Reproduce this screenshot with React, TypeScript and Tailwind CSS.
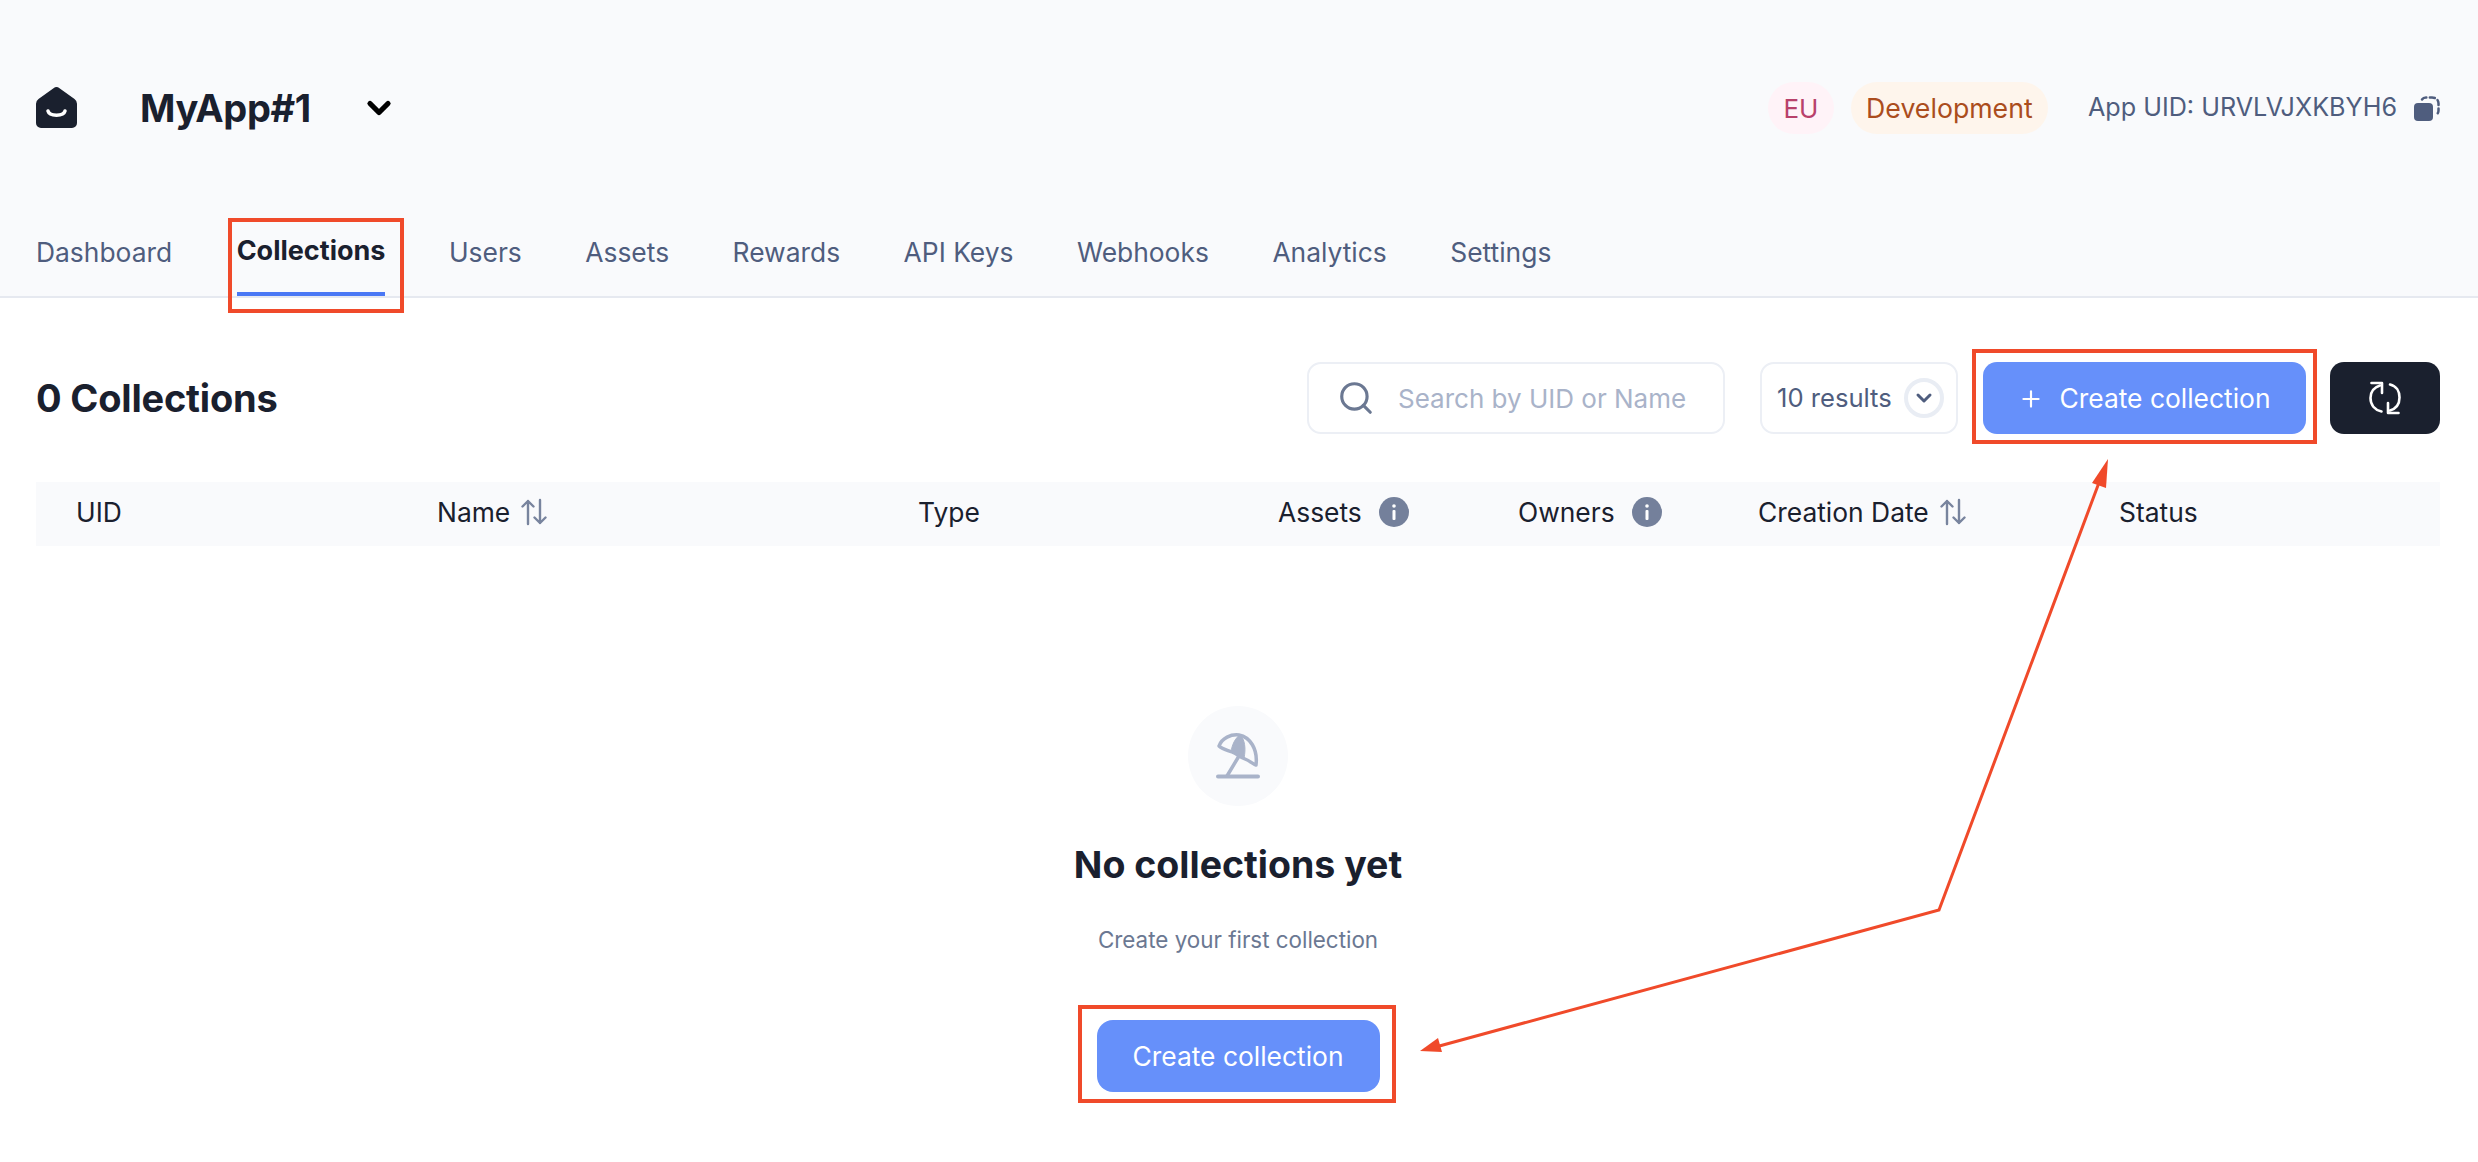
import { ChevronDown, Plus, Search } from 'lucide-react'

const tabs = ['Dashboard', 'Collections', 'Users', 'Assets', 'Rewards', 'API Keys', 'Webhooks', 'Analytics', 'Settings']

function Logo() {
  return (
    <svg width="41" height="42" viewBox="0 0 41 42" className="shrink-0">
      <path d="M17.5 1.2a5 5 0 0 1 6 0L38.5 12a6 6 0 0 1 2.5 4.8V36a5 5 0 0 1-5 5H5a5 5 0 0 1-5-5V16.8A6 6 0 0 1 2.5 12z" fill="#1a202e" />
      <path d="M12 24c1.5 5.5 15.500 5.500 17 0" fill="none" stroke="#fff" strokeWidth="3.500" strokeLinecap="round" />
    </svg>
  )
}

function CopyIcon() {
  return (
    <svg width="26" height="25" viewBox="0 0 26 25">
      <rect x="0" y="7" width="19" height="18" rx="4" fill="#4f5d7e" />
      <path d="M8 3.500c1-1.500 2-2 4-2h6c4 0 6.500 2.500 6.500 6v7c0 1.500-.5 3-2 4" fill="none" stroke="#4f5d7e" strokeWidth="2.500" strokeDasharray="5 3.500" strokeLinecap="round" />
    </svg>
  )
}

function SortArrows() {
  return (
    <svg width="28" height="28" viewBox="0 0 28 28" fill="none" strokeWidth="2.400" strokeLinecap="round" strokeLinejoin="round" stroke="#78849e">
      <path d="M8 26V3M2.500 8.500 8 3l5.500 5.500" />
      <path d="M20 2v23M14.500 19.500 20 25l5.500-5.500" />
    </svg>
  )
}

function InfoDot() {
  return (
    <span className="flex size-[30px] items-center justify-center rounded-full bg-[#74809b]">
      <svg width="6" height="16" viewBox="0 0 6 16" fill="#fff">
        <circle cx="3" cy="2" r="1.800" />
        <rect x="1.500" y="6" width="3" height="10" rx="1" />
      </svg>
    </span>
  )
}

function RefreshIcon() {
  return (
    <svg width="32" height="34" viewBox="0 0 32 34" fill="none" stroke="#fff" strokeWidth="2.600" strokeLinecap="round" strokeLinejoin="round">
      <path d="M2.500 2H13v10" />
      <path d="M11 4.500C4.500 6.500 1.500 11.500 1.500 17c0 7 4.500 12 11 13.500" />
      <path d="M29.500 32H19V22" />
      <path d="M21 3.500c6.500 1.500 9.500 7 9.500 13 0 6-3 11-9.500 13" />
    </svg>
  )
}

function BeachIcon() {
  return (
    <svg width="44" height="46" viewBox="0 0 44 46" fill="none" stroke="#a9b3c9" strokeLinecap="round" strokeLinejoin="round">
      <path d="M3 13C6 5 15 1 23 2c11 2 19 14 17 30-3-1-6-4-11-6-5-2-8-5-13-7-5-2-10-3-13-6z" strokeWidth="3.500" />
      <path d="M24 2c5 4 6 14 4 23-4-2-9-4-13-6 1-7 4-14 9-17z" fill="#a9b3c9" strokeWidth="1" />
      <path d="M23 23 11 43" strokeWidth="3.500" />
      <path d="M2 43.500h40" strokeWidth="4" />
    </svg>
  )
}

// Callouts drawn over the page: boxes around both create buttons and the tab, plus the arrows between them
function Callouts() {
  return (
    <>
      <div className="absolute left-[228px] top-[218px] h-[95px] w-[176px] border-4 border-[#f04a2a]" />
      <div className="absolute left-[1972px] top-[349px] h-[95px] w-[345px] border-4 border-[#f04a2a]" />
      <div className="absolute left-[1078px] top-[1005px] h-[98px] w-[318px] border-4 border-[#f04a2a]" />
      <svg className="pointer-events-none absolute left-0 top-0" width="2478" height="1162" fill="none">
        <path d="M1432 1048 1939 910 2100 480" stroke="#f04a2a" strokeWidth="3" />
        <path d="M1420 1051 1438 1038 1442 1052z" fill="#f04a2a" />
        <path d="M2108 459 2092 483 2106 488z" fill="#f04a2a" />
      </svg>
    </>
  )
}

export default function App() {
  return (
    <div className="relative min-h-[1162px] bg-white font-['Inter',sans-serif] text-[#1a202e]">
      <header className="h-[298px] border-b-2 border-[#e6e9f0] bg-[#f9fafc] pl-9 pr-[38px]">
        <div className="flex h-[216px] items-center justify-between">
          <div className="flex items-center">
            <Logo />
            <h1 className="ml-[63px] text-[38px] font-bold tracking-[-0.01em]">MyApp#1</h1>
            <ChevronDown className="ml-[50px] size-[36px] text-black" strokeWidth={3.500} />
          </div>
          <div className="flex items-center">
            <span className="flex h-[52px] w-[66px] items-center justify-center rounded-full bg-[#fff3f8] text-[26px] text-[#b8416b]">EU</span>
            <span className="ml-[17px] flex h-[52px] w-[197px] items-center justify-center rounded-full bg-[#fef5ec] text-[26.700px] text-[#ab4d1d]">Development</span>
            <span className="ml-10 text-[25.200px] text-[#4f5d7e]">App UID: URVLVJXKBYH6</span>
            <span className="ml-[17px]"><CopyIcon /></span>
          </div>
        </div>
        <nav className="flex h-[80px] gap-[63.500px]">
          {tabs.map(tab => (
            <a key={tab} className={tab === 'Collections' ? 'ml-px flex h-full flex-col items-center justify-between pt-[15px] text-[27px] font-bold text-[#1a202e]' : 'pt-[17px] text-[26.400px] text-[#4f5d7e]'}>
              {tab}
              {tab === 'Collections' && <span className="h-1 w-full bg-[#4a78f5]" />}
            </a>
          ))}
        </nav>
      </header>

      <main className="pl-9 pr-[38px]">
        <div className="flex items-center justify-between pt-[64px]">
          <h2 className="text-[38px] font-bold tracking-[-0.005em]">0 Collections</h2>
          <div className="flex items-center">
            <div className="flex h-[72px] w-[418px] items-center gap-[23px] rounded-[14px] border-2 border-[#eceff5] pl-[28px]">
              <Search className="size-[38px] text-[#6b7892]" strokeWidth={2} />
              <span className="text-[26px] text-[#a9b3c9]">Search by UID or Name</span>
            </div>
            <div className="ml-[35px] flex h-[72px] w-[198px] items-center justify-between rounded-[14px] border-2 border-[#eceff5] pl-[15px] pr-3">
              <span className="text-[25.600px] text-[#4f5d7e]">10 results</span>
              <span className="flex size-[40px] items-center justify-center rounded-full border-4 border-[#e9edf4]">
                <ChevronDown className="size-[24px] text-[#4f5d7e]" strokeWidth={3} />
              </span>
            </div>
            <button className="ml-[25px] flex h-[72px] w-[323px] items-center justify-center gap-[15px] rounded-[14px] bg-[#6690fa] pt-px text-[26.400px] text-white">
              <Plus className="size-[26px]" strokeWidth={2} />
              Create collection
            </button>
            <button className="ml-6 flex h-[72px] w-[110px] items-center justify-center rounded-[14px] bg-[#1a202e]">
              <RefreshIcon />
            </button>
          </div>
        </div>

        <div className="mt-[48px] grid h-[64px] grid-cols-[361px_481px_360px_240px_240px_361px_1fr] items-center bg-[#f9fafc] px-10 pb-[3px] text-[26.400px]">
          <span>UID</span>
          <span className="flex items-center gap-[10px]">Name <SortArrows /></span>
          <span>Type</span>
          <span className="flex items-center gap-[17px]">Assets <InfoDot /></span>
          <span className="flex items-center gap-[17px]">Owners <InfoDot /></span>
          <span className="flex items-center gap-[10px]">Creation Date <SortArrows /></span>
          <span>Status</span>
        </div>

        <div className="flex flex-col items-center pt-[160px]">
          <div className="flex size-[100px] items-center justify-center rounded-full bg-[#f9fafc]">
            <BeachIcon />
          </div>
          <h3 className="mt-[31px] text-[37.500px] font-bold">No collections yet</h3>
          <p className="mt-[30px] text-[22.400px] text-[#6b7892]">Create your first collection</p>
          <button className="mt-[63px] flex h-[72px] w-[283px] items-center justify-center rounded-[16px] bg-[#6690fa] pt-[2px] text-[26.400px] text-white">
            Create collection
          </button>
        </div>
      </main>

      <Callouts />
    </div>
  )
}
